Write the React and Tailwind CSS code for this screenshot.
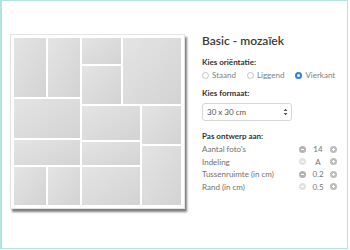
import React from "react";

function Tile({ className }) {
  return <div className={"bg-gradient-to-br from-[#e4e4e4] to-[#d3d3d3] " + className} />;
}

function Radio({ label, checked }) {
  return (
    <label className="flex items-center gap-[3px]">
      {checked ? (
        <span className="w-[7px] h-[7px] rounded-full bg-[#2f7fe0] flex items-center justify-center">
          <span className="w-[3px] h-[3px] rounded-full bg-white" />
        </span>
      ) : (
        <span className="w-[7px] h-[7px] rounded-full border border-[#c4c4c4] bg-white" />
      )}
      <span className="text-[#808080]">{label}</span>
    </label>
  );
}

function Stepper({ label, value, minusActive }) {
  return (
    <div className="flex items-center h-[12.5px]">
      <span className="flex-1 text-[#707070]">{label}</span>
      <span
        className={
          "w-[7px] h-[7px] rounded-full flex items-center justify-center " +
          (minusActive ? "bg-[#b3b3b3]" : "bg-[#e2e2e2]")
        }
      >
        <span className="w-[3px] h-px bg-white" />
      </span>
      <span className="w-[24px] text-center text-[#777]">{value}</span>
      <span className="w-[7px] h-[7px] rounded-full bg-[#bdbdbd] relative">
        <span className="absolute left-[2px] top-[3px] w-[3px] h-px bg-white" />
        <span className="absolute left-[3px] top-[2px] w-px h-[3px] bg-white" />
      </span>
    </div>
  );
}

export default function App() {
  return (
    <div
      className="w-[348px] h-[249px] border border-[#b3e2e2] border-l-2 bg-white pl-[8px] pt-[33px] flex items-start"
      style={{ fontFamily: "Lato, 'Open Sans', sans-serif" }}
    >
      {/* Mosaic preview */}
      <div className="bg-white border border-[#e4e4e4] p-[3px] shadow-[2px_3px_2px_rgba(0,0,0,0.5)]">
        <div className="w-[167px] h-[167px] flex gap-[2px]">
          <div className="w-[66px] flex flex-col gap-[2px]">
            <div className="h-[59px] flex gap-[2px]">
              <Tile className="flex-1" />
              <Tile className="flex-1" />
            </div>
            <Tile className="h-[39px]" />
            <Tile className="h-[25px]" />
            <div className="flex-1 flex gap-[2px]">
              <Tile className="flex-1" />
              <Tile className="flex-1" />
            </div>
          </div>
          <div className="flex-1 flex flex-col gap-[2px]">
            <div className="h-[66px] flex gap-[2px]">
              <div className="w-[39px] flex flex-col gap-[2px]">
                <Tile className="h-[26px]" />
                <Tile className="flex-1" />
              </div>
              <Tile className="flex-1" />
            </div>
            <div className="flex-1 flex gap-[2px]">
              <div className="w-[58px] flex flex-col gap-[2px]">
                <Tile className="h-[34px]" />
                <Tile className="h-[23px]" />
                <Tile className="flex-1" />
              </div>
              <div className="flex-1 flex flex-col gap-[2px]">
                <Tile className="h-[38px]" />
                <Tile className="flex-1" />
              </div>
            </div>
          </div>
        </div>
      </div>

      {/* Options panel */}
      <div className="ml-[17px] -mt-[1px] w-[136px] text-[8px] leading-[10px]">
        <h1 className="text-[12px] leading-[16px] font-semibold text-[#3a3a3a]">Basic - mozaïek</h1>

        <p className="mt-[8px] font-bold text-[#333]">Kies oriëntatie:</p>
        <div className="mt-[3px] flex items-center gap-[11px]">
          <Radio label="Staand" />
          <Radio label="Liggend" />
          <Radio label="Vierkant" checked />
        </div>

        <p className="mt-[8px] font-bold text-[#333]">Kies formaat:</p>
        <div className="mt-[5px] w-[90px] h-[18px] border border-[#d6d6d6] rounded-[3px] flex items-center justify-between pl-[4px] pr-[3px] text-[#555]">
          <span>30 x 30 cm</span>
          <svg width="5" height="8" viewBox="0 0 5 8">
            <path d="M0.5 3 L2.5 0.8 L4.5 3 Z M0.5 5 L2.5 7.2 L4.5 5 Z" fill="#555" />
          </svg>
        </div>

        <p className="mt-[10px] font-bold text-[#333]">Pas ontwerp aan:</p>
        <div className="mt-[2px] pr-[1px]">
          <Stepper label="Aantal foto's" value="14" minusActive />
          <Stepper label="Indeling" value="A" />
          <Stepper label="Tussenruimte (in cm)" value="0.2" minusActive />
          <Stepper label="Rand (in cm)" value="0.5" />
        </div>
      </div>
    </div>
  );
}
